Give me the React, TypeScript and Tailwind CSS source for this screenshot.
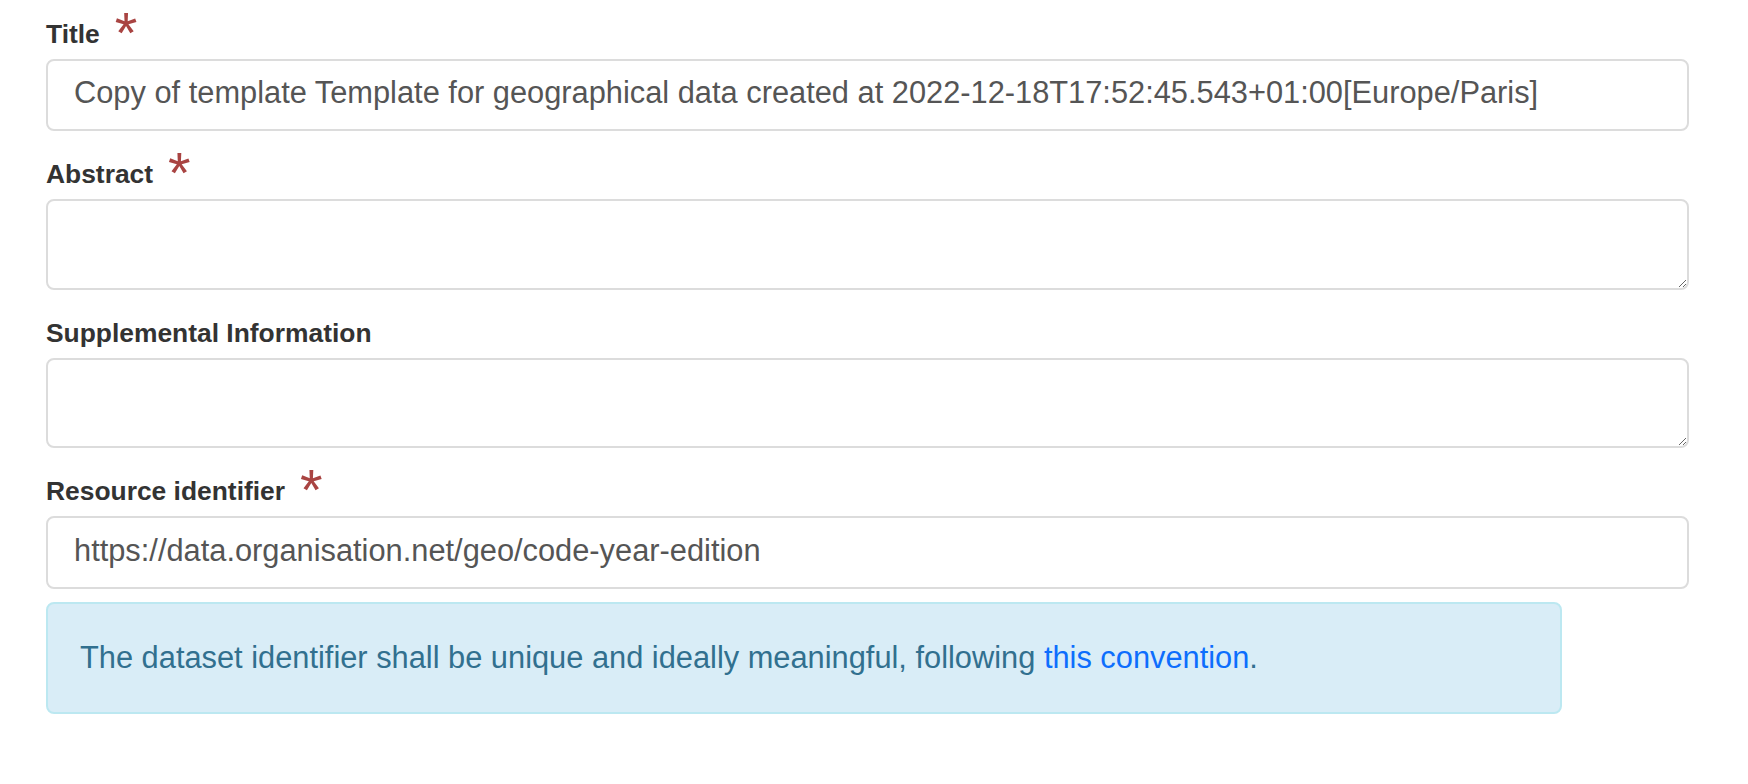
import React from 'react';

const Required: React.FC = () => (
  <span className="inline-block ml-[15px] text-[58px] leading-[0] align-[-10px] font-normal text-[#a94442]">*</span>
);

type FieldProps = {
  label: string;
  required?: boolean;
  children: React.ReactNode;
};

const Field: React.FC<FieldProps> = ({ label, required, children }) => (
  <div className="mb-[25px]">
    <label className="block text-[26.4px] leading-[37px] font-bold text-[#333] mb-[6px]">
      {label}
      {required && <Required />}
    </label>
    {children}
  </div>
);

const inputClass =
  'block w-[1643px] h-[72px] px-[26px] pb-[4px] bg-white border-2 border-[#dcdcdc] rounded-[8px] text-[30.8px] text-[#555] outline-none';

const textareaClass =
  'block w-[1643px] px-[26px] py-[12px] bg-white border-2 border-[#dcdcdc] rounded-[8px] text-[30.8px] text-[#555] outline-none';

const App: React.FC = () => {
  return (
    <div className="min-h-[784px] bg-white pl-[46px] pt-[16px] font-['Liberation_Sans',Arial,sans-serif]">
      {/* Title */}
      <Field label="Title" required>
        <input
          type="text"
          className={inputClass}
          defaultValue="Copy of template Template for geographical data created at 2022-12-18T17:52:45.543+01:00[Europe/Paris]"
        />
      </Field>

      {/* Abstract */}
      <Field label="Abstract" required>
        <textarea className={`${textareaClass} h-[91px]`} />
      </Field>

      {/* Supplemental */}
      <Field label="Supplemental Information">
        <textarea className={`${textareaClass} h-[90px]`} />
      </Field>

      {/* Resource identifier */}
      <div>
        <label className="block text-[26.4px] leading-[37px] font-bold text-[#333] mb-[6px]">
          Resource identifier
          <Required />
        </label>
        <input
          type="text"
          className={`${inputClass} h-[73px]`}
          defaultValue="https://data.organisation.net/geo/code-year-edition"
        />
        <div className="mt-[13px] w-[1516px] px-[32px] py-[32px] bg-[#d9edf7] border-2 border-[#bce8f1] rounded-[8px] text-[30.8px] leading-[44px] text-[#31708f]">
          The dataset identifier shall be unique and ideally meaningful, following{' '}
          <a href="#" className="text-[#0d6efd]">
            this convention
          </a>
          .
        </div>
      </div>
    </div>
  );
};

export default App;
